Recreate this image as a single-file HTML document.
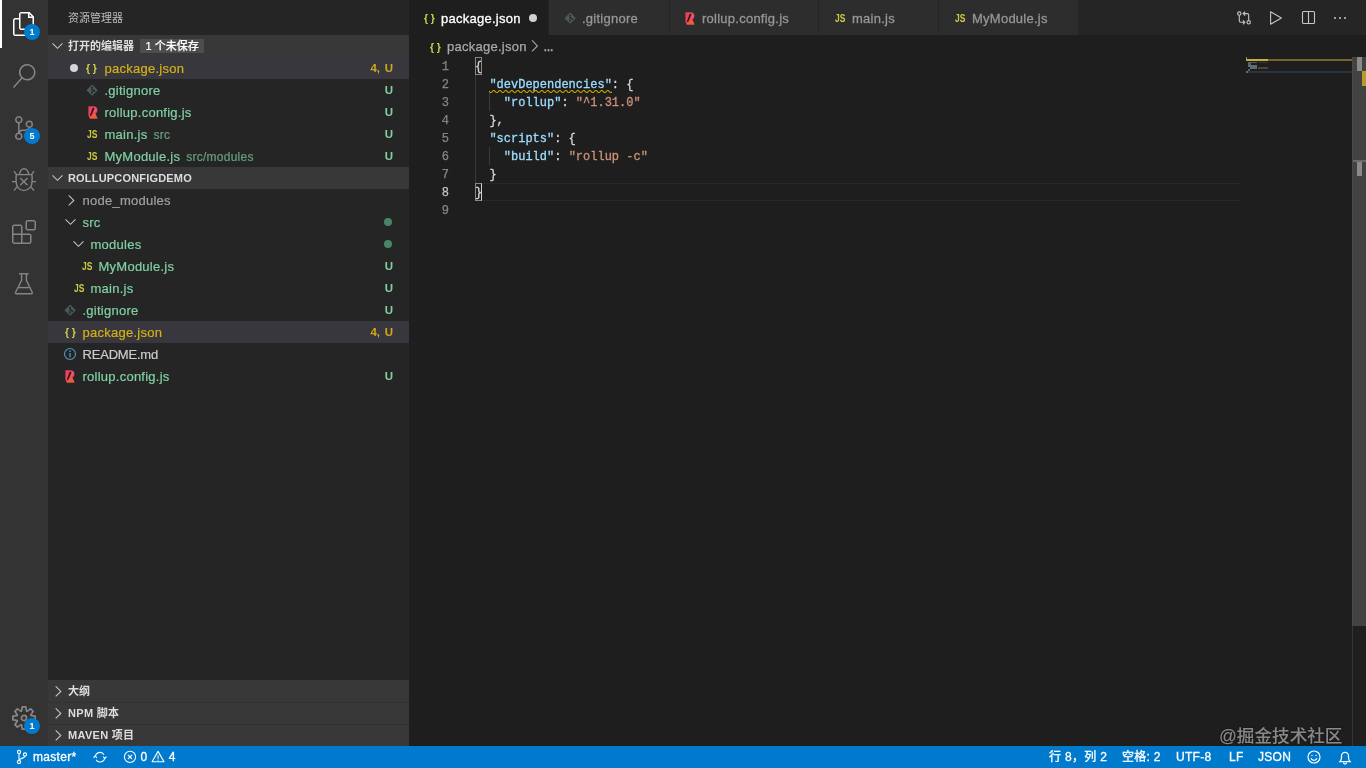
<!DOCTYPE html>
<html lang="zh-CN">
<head>
<meta charset="utf-8">
<title>package.json — rollupConfigDemo</title>
<style>
html,body{margin:0;padding:0;}
body{width:1366px;height:768px;overflow:hidden;background:#1e1e1e;position:relative;will-change:transform;
  font-family:"Liberation Sans","Noto Sans CJK SC",sans-serif;font-size:13px;color:#cccccc;}
.abs{position:absolute;}
#activity{position:absolute;left:0;top:0;width:48px;height:746px;background:#333333;}
#activity .ind{position:absolute;left:0;top:0;width:2px;height:48px;background:#ffffff;}
#activity svg{position:absolute;left:12px;width:24px;height:24px;}
.badge{position:absolute;width:16px;height:16px;border-radius:8px;background:#007acc;color:#fff;
  font-size:9px;font-weight:bold;line-height:16px;text-align:center;}
#sidebar{position:absolute;left:48px;top:0;width:361px;height:746px;background:#252526;z-index:2;}
#sidebar .title{position:absolute;left:20px;top:0;height:35px;line-height:36px;font-size:11px;color:#bbbbbb;}
.hdr{position:absolute;left:0;width:361px;height:22px;background:#383838;line-height:22px;
  font-size:11px;font-weight:bold;color:#dddddd;}
.hdr .tx{position:absolute;left:20px;top:0;white-space:nowrap;}
.hdr svg{position:absolute;left:3px;top:3px;width:16px;height:16px;}
.row{position:absolute;left:0;width:361px;height:22px;line-height:22px;white-space:nowrap;}
.row.sel{background:#37373d;}
.row .lbl{position:absolute;top:1px;margin-left:.5px;letter-spacing:.25px;-webkit-text-stroke:.2px;}
.row .desc{font-size:12px;opacity:.7;margin-left:6px;}
.row .st{position:absolute;right:16px;top:-.5px;font-size:11.500px;font-weight:bold;word-spacing:1.500px;}
.row .st.y{color:#cfaa18;}
.row svg{position:absolute;}
.g{color:#80d0a2;}
.y{color:#d4b118;}
.jsic{position:absolute;font-size:10px;font-weight:bold;color:#cbcb41;letter-spacing:0;transform:scaleX(.85);transform-origin:0 50%;margin-left:.6px;margin-top:.5px;}
.bric{position:absolute;font-size:11.500px;font-weight:bold;color:#cfd24a;letter-spacing:3.100px;margin-top:0;margin-left:.6px;transform:scaleX(.9);transform-origin:0 50%;-webkit-text-stroke:0;}
.ubadge{position:absolute;left:92px;top:4px;height:14px;line-height:14px;padding:0 5.500px;background:#4d4d4d;color:#ffffff;font-weight:500;font-size:11px;white-space:nowrap;-webkit-text-stroke:.2px;}
.udot{position:absolute;width:8px;height:8px;border-radius:4px;background:#d4d4dc;}
.sdot{display:inline-block;width:8px;height:8px;border-radius:4px;background:#478569;vertical-align:middle;position:relative;top:-.5px;left:-1.500px}
.dim{color:#a0a0a0;}
#editor{position:absolute;left:408px;top:0;width:958px;height:746px;background:#1e1e1e;}
#tabs{position:absolute;left:0;top:0;width:958px;height:35px;background:#252526;}
.tab{position:absolute;top:0;height:35px;background:#2d2d2d;line-height:36px;color:#969696;white-space:nowrap;}
.tab.act{background:#1e1e1e;color:#ffffff;}
.tab .lbl{position:absolute;top:1px;letter-spacing:.25px;-webkit-text-stroke:.3px;}
#crumbs{position:absolute;left:0;top:36px;letter-spacing:.25px;-webkit-text-stroke:.25px;height:22px;line-height:22px;color:#a9a9a9;white-space:nowrap;}
.code{position:absolute;left:67px;font-family:"Liberation Mono",monospace;font-size:12px;line-height:18px;height:18px;white-space:pre;color:#d4d4d4;margin-top:1px;-webkit-text-stroke:.3px;}
.ln{position:absolute;left:0;width:41px;text-align:right;font-family:"Liberation Mono",monospace;font-size:12px;line-height:18px;height:18px;color:#858585;margin-top:1px;-webkit-text-stroke:.25px;}
.k{color:#9cdcfe;}
.s{color:#ce9178;}
#status{position:absolute;left:0;top:746px;width:1366px;height:22px;background:#007acc;color:#ffffff;font-size:12px;line-height:22px;white-space:nowrap;}
#status span{position:absolute;top:0;letter-spacing:.3px;-webkit-text-stroke:.3px #fff;}
#status svg{position:absolute;}
</style>
</head>
<body>
<div id="activity">
  <div class="ind"></div>
  <svg style="top:12px" viewBox="0 0 24 24"><path fill="#ffffff" d="M17.5 0H8.5L7 1.5V6H2.5L1 7.5V22.57L2.5 24H14.57L16 22.57V18H20.7L22 16.57V4.5L17.5 0ZM17.5 2.12L19.88 4.5H17.5V2.12ZM14.5 22.5H2.5V7.5H7V16.57L8.5 18H14.5V22.5ZM20.5 16.5H8.5V1.5H16V6H20.5V16.5Z"/></svg>
  <div class="badge" style="left:24px;top:24px">1</div>
  <svg style="top:64px" viewBox="0 0 24 24"><path fill="#858585" d="M15.25 0a8.25 8.25 0 0 0-6.18 13.72L1 22.88l1.12 1 8.05-9.12A8.251 8.251 0 1 0 15.25.01V0zm0 15a6.75 6.75 0 1 1 0-13.5 6.75 6.75 0 0 1 0 13.5z"/></svg>
  <svg style="top:116px" viewBox="0 0 24 24"><path fill="#858585" d="M21.007 8.222A3.738 3.738 0 0 0 15.045 5.2a3.737 3.737 0 0 0 1.156 6.583 2.988 2.988 0 0 1-2.668 1.67h-2.99a4.456 4.456 0 0 0-2.989 1.165V7.4a3.737 3.737 0 1 0-1.494 0v9.117a3.776 3.776 0 1 0 1.816.099 2.99 2.99 0 0 1 2.668-1.667h2.99a4.484 4.484 0 0 0 4.223-3.039 3.736 3.736 0 0 0 3.25-3.687zM4.565 3.738a2.242 2.242 0 1 1 4.484 0 2.242 2.242 0 0 1-4.484 0zm4.484 16.441a2.242 2.242 0 1 1-4.484 0 2.242 2.242 0 0 1 4.484 0zm8.221-9.715a2.242 2.242 0 1 1 0-4.485 2.242 2.242 0 0 1 0 4.485z"/></svg>
  <div class="badge" style="left:24px;top:128px">5</div>
  <svg style="top:168px" viewBox="0 0 24 24" fill="none" stroke="#858585" stroke-width="1.4" stroke-linecap="butt">
    <path d="M7.6 6.6a4.5 5.9 0 0 1 9 0"/>
    <path d="M5.2 6.6h13.8c1 0 1.2.4 1.2 1.2v5.6c0 5-3.6 9.2-8.2 9.2s-7.8-4.200-7.800-9.200V7.800c0-.8.200-1.200 1-1.200z" transform="translate(-.1 0)"/>
    <path d="M8.200 10l7.300 7.300M15.500 10l-7.300 7.300"/>
    <path d="M4.700 6.800L2 3.200M19.300 6.800L22 3.200M0 13.600h4M20 13.600h4M5.200 18.600L2 22.600M18.800 18.600L22 22.600"/>
  </svg>
  <svg style="top:220px" viewBox="0 0 24 24"><path fill="#858585" fill-rule="evenodd" clip-rule="evenodd" d="M13.500 1.500L15 0H22.500L24 1.500V9L22.500 10.500H15L13.500 9V1.500ZM15 1.500V9H22.500V1.500H15ZM0 15V6L1.500 4.500H9L10.500 6V13.500H18L19.500 15V22.500L18 24H10.500H9H1.500L0 22.500V15ZM9 13.500V6H1.500V13.500H9ZM9 15H1.500V22.500H9V15ZM10.500 22.500H18V15H10.500V22.500Z"/></svg>
  <svg style="top:272px" viewBox="0 0 24 24" fill="none" stroke="#858585" stroke-width="1.4" stroke-linejoin="round">
    <path d="M7 1.800h9.600"/>
    <path d="M9.600 1.800v6.600L3.600 20.200c-.4.900 0 1.600 1 1.600h14.600c1 0 1.400-.7 1-1.600L14.400 8.400V1.800"/>
    <path d="M6.600 15.600h10.800"/>
  </svg>
  <svg style="top:706px" viewBox="0 0 24 24"><path fill="#858585" d="M19.850 8.750l4.150.83v4.840l-4.150.83 2.350 3.520-3.430 3.430-3.520-2.350-.83 4.150H9.580l-.83-4.150-3.520 2.350-3.430-3.430 2.350-3.520L0 14.420V9.580l4.150-.83L1.800 5.230 5.230 1.800l3.520 2.350L9.580 0h4.840l.83 4.150 3.520-2.350 3.430 3.430-2.350 3.520zm-1.570 5.070l4-.81v-2l-4-.81-.54-1.300 2.290-3.430-1.430-1.430-3.430 2.290-1.300-.54-.81-4h-2l-.81 4-1.300.54-3.430-2.290-1.430 1.430L6.380 8.900l-.54 1.300-4 .81v2l4 .81.540 1.300-2.290 3.430 1.430 1.430 3.430-2.290 1.300.54.810 4h2l.81-4 1.300-.54 3.430 2.290 1.430-1.430-2.290-3.430.54-1.300zm-8.186-4.672A3.430 3.430 0 0 1 12 8.570 3.440 3.440 0 0 1 15.430 12a3.430 3.430 0 1 1-5.336-2.852zm.956 4.274c.281.188.612.288.95.288A1.700 1.700 0 0 0 13.710 12a1.710 1.710 0 1 0-2.660 1.422z"/></svg>
  <div class="badge" style="left:24px;top:718px">1</div>
</div>
<div id="sidebar">
  <div class="title">资源管理器</div>
  <div class="hdr" style="top:35px"><svg viewBox="0 0 16 16" style="left:2px;top:3px;width:16px;height:16px"><path fill="none" stroke="#c5c5c5" stroke-width="1.1" d="M2.500 5.400L7.500 10.300L12.500 5.400"/></svg><span class="tx">打开的编辑器</span><span class="ubadge">1 个未保存</span></div>
  <div class="row sel" style="top:57px"><span class="udot" style="left:22px;top:7px"></span><span class="bric" style="left:37.400px">{}</span><span class="lbl y" style="left:56px">package.json</span><span class="st y">4, U</span></div>
  <div class="row" style="top:79px"><svg viewBox="0 0 12 12" style="left:37.650px;top:4.700px;width:12.300px;height:12.300px"><path fill="#4b5b5c" d="M6 .5L11.500 6L6 11.500L.5 6z"/><path fill="none" stroke="#252526" stroke-width="1.100" d="M5.800 3.200V8.800M5.800 4.600L8 6.800"/><circle cx="5.800" cy="3.300" r=".9" fill="#252526"/><circle cx="5.800" cy="8.600" r=".9" fill="#252526"/><circle cx="8.100" cy="6.800" r=".9" fill="#252526"/></svg><span class="lbl g" style="left:56px">.gitignore</span><span class="st g">U</span></div>
  <div class="row" style="top:101px"><svg class="abs" viewBox="0 0 10 13" style="left:39.600px;top:5.200px;width:10px;height:13px"><path fill="#e2455c" d="M.4.200H5.400C8 .200 9.500 1.900 9.500 4.100C9.500 5.700 8.700 6.900 7.500 7.600L9.500 12.500H1.700L.4 9.500z"/><path fill="#ee5a3c" d="M1.700 12.500L5.600 6.300L7 7.600L9.500 12.500z"/><path fill="#d9607e" d="M5.800 1.300C7.500 1.300 8.500 2.600 8.500 4C8.500 5.300 7.700 6.200 6.800 6.700L5.800 6.100L6.900 2.800z"/><path fill="#3a0c10" d="M4.900 1.600L6.500 2.300L3.400 9.400L1.700 9.900z"/></svg><span class="lbl g" style="left:56px">rollup.config.js</span><span class="st g">U</span></div>
  <div class="row" style="top:123px"><span class="jsic" style="left:38px">JS</span><span class="lbl g" style="left:56px">main.js<span class="desc">src</span></span><span class="st g">U</span></div>
  <div class="row" style="top:145px"><span class="jsic" style="left:38px">JS</span><span class="lbl g" style="left:56px">MyModule.js<span class="desc">src/modules</span></span><span class="st g">U</span></div>
  <div class="hdr" style="top:167px"><svg viewBox="0 0 16 16" style="left:2px;top:3px;width:16px;height:16px"><path fill="none" stroke="#c5c5c5" stroke-width="1.1" d="M2.500 5.400L7.500 10.300L12.500 5.400"/></svg><span class="tx" style="letter-spacing:.18px">ROLLUPCONFIGDEMO</span></div>
  <div class="row" style="top:189px"><svg viewBox="0 0 16 16" style="left:15px;top:3px;width:16px;height:16px"><path fill="none" stroke="#c5c5c5" stroke-width="1.1" d="M5.700 3.400L10.800 8.400L5.700 13.400"/></svg><span class="lbl dim" style="left:34px">node_modules</span></div>
  <div class="row" style="top:211px"><svg viewBox="0 0 16 16" style="left:15px;top:3px;width:16px;height:16px"><path fill="none" stroke="#c5c5c5" stroke-width="1.1" d="M2.500 5.400L7.500 10.300L12.500 5.400"/></svg><span class="lbl g" style="left:34px">src</span><span class="st g"><i class="sdot"></i></span></div>
  <div class="row" style="top:233px"><svg viewBox="0 0 16 16" style="left:23px;top:3px;width:16px;height:16px"><path fill="none" stroke="#c5c5c5" stroke-width="1.1" d="M2.500 5.400L7.500 10.300L12.500 5.400"/></svg><span class="lbl g" style="left:42px">modules</span><span class="st g"><i class="sdot"></i></span></div>
  <div class="row" style="top:255px"><span class="jsic" style="left:33px">JS</span><span class="lbl g" style="left:50px">MyModule.js</span><span class="st g">U</span></div>
  <div class="row" style="top:277px"><span class="jsic" style="left:25px">JS</span><span class="lbl g" style="left:42px">main.js</span><span class="st g">U</span></div>
  <div class="row" style="top:299px"><svg viewBox="0 0 12 12" style="left:15.650px;top:4.700px;width:12.300px;height:12.300px"><path fill="#4b5b5c" d="M6 .5L11.500 6L6 11.500L.5 6z"/><path fill="none" stroke="#252526" stroke-width="1.100" d="M5.800 3.200V8.800M5.800 4.600L8 6.800"/><circle cx="5.800" cy="3.300" r=".9" fill="#252526"/><circle cx="5.800" cy="8.600" r=".9" fill="#252526"/><circle cx="8.100" cy="6.800" r=".9" fill="#252526"/></svg><span class="lbl g" style="left:34px">.gitignore</span><span class="st g">U</span></div>
  <div class="row sel" style="top:321px"><span class="bric" style="left:16px">{}</span><span class="lbl y" style="left:34px">package.json</span><span class="st y">4, U</span></div>
  <div class="row" style="top:343px"><svg viewBox="0 0 14 14" style="left:15px;top:4px;width:14px;height:14px"><circle cx="7" cy="7" r="5.500" fill="none" stroke="#519aba" stroke-width="1.1"/><path stroke="#519aba" stroke-width="1.300" d="M7 6v4.200M7 3.600v1.300"/></svg><span class="lbl " style="left:34px;letter-spacing:-.2px">README.md</span></div>
  <div class="row" style="top:365px"><svg class="abs" viewBox="0 0 10 13" style="left:17.0px;top:5.0px;width:10px;height:13px"><path fill="#e2455c" d="M.4.200H5.400C8 .200 9.500 1.900 9.500 4.100C9.500 5.700 8.700 6.900 7.500 7.600L9.500 12.500H1.700L.4 9.500z"/><path fill="#ee5a3c" d="M1.700 12.500L5.600 6.300L7 7.600L9.500 12.500z"/><path fill="#d9607e" d="M5.800 1.300C7.500 1.300 8.500 2.600 8.500 4C8.500 5.300 7.700 6.200 6.800 6.700L5.800 6.100L6.900 2.800z"/><path fill="#3a0c10" d="M4.900 1.600L6.500 2.300L3.400 9.400L1.700 9.900z"/></svg><span class="lbl g" style="left:34px">rollup.config.js</span><span class="st g">U</span></div>
  <div class="hdr" style="top:680px"><svg viewBox="0 0 16 16" style="left:2px;top:3px;width:16px;height:16px"><path fill="none" stroke="#c5c5c5" stroke-width="1.1" d="M5.700 3.400L10.800 8.400L5.700 13.400"/></svg><span class="tx">大纲</span></div>
  <div class="hdr" style="top:702px;border-top:1px solid #313132;box-sizing:border-box"><svg viewBox="0 0 16 16" style="left:2px;top:2px;width:16px;height:16px"><path fill="none" stroke="#c5c5c5" stroke-width="1.1" d="M5.700 3.400L10.800 8.400L5.700 13.400"/></svg><span class="tx" style="top:-1px;letter-spacing:.3px">NPM 脚本</span></div>
  <div class="hdr" style="top:724px;border-top:1px solid #313132;box-sizing:border-box"><svg viewBox="0 0 16 16" style="left:2px;top:2px;width:16px;height:16px"><path fill="none" stroke="#c5c5c5" stroke-width="1.1" d="M5.700 3.400L10.800 8.400L5.700 13.400"/></svg><span class="tx" style="top:-1px;letter-spacing:.3px">MAVEN 项目</span></div>
</div>
<div id="editor">
  <div id="tabs">
    <div class="tab act" style="left:0;width:140px"><span class="bric" style="left:15px">{}</span><span class="lbl" style="left:33px">package.json</span><span class="udot" style="left:120.500px;top:14.200px;background:#d0d0d0"></span></div>
    <div class="tab" style="left:141px;width:120px"><svg class="abs" viewBox="0 0 12 12" style="left:14.650px;top:11.700px;width:12.300px;height:12.300px"><path fill="#4b5b5c" d="M6 .5L11.500 6L6 11.500L.5 6z"/><path fill="none" stroke="#2d2d2d" stroke-width="1.100" d="M5.800 3.200V8.800M5.800 4.600L8 6.800"/><circle cx="5.800" cy="3.300" r=".9" fill="#2d2d2d"/><circle cx="5.800" cy="8.600" r=".9" fill="#2d2d2d"/><circle cx="8.100" cy="6.800" r=".9" fill="#2d2d2d"/></svg><span class="lbl" style="left:33px">.gitignore</span></div>
    <div class="tab" style="left:262px;width:148px"><svg class="abs" viewBox="0 0 10 13" style="left:15.300px;top:11.900px;width:10px;height:13px"><path fill="#e2455c" d="M.4.200H5.400C8 .200 9.500 1.900 9.500 4.100C9.500 5.700 8.700 6.900 7.500 7.600L9.500 12.500H1.700L.4 9.500z"/><path fill="#ee5a3c" d="M1.700 12.500L5.600 6.300L7 7.600L9.500 12.500z"/><path fill="#d9607e" d="M5.800 1.300C7.500 1.300 8.500 2.600 8.500 4C8.500 5.300 7.700 6.200 6.800 6.700L5.800 6.100L6.900 2.800z"/><path fill="#3a0c10" d="M4.900 1.600L6.500 2.300L3.400 9.400L1.700 9.900z"/></svg><span class="lbl" style="left:32px">rollup.config.js</span></div>
    <div class="tab" style="left:411px;width:119px"><span class="jsic" style="left:15px">JS</span><span class="lbl" style="left:33px">main.js</span></div>
    <div class="tab" style="left:531px;width:139px"><span class="jsic" style="left:15px">JS</span><span class="lbl" style="left:33px">MyModule.js</span></div>
    <svg class="abs" style="left:827px;top:10px;width:16px;height:16px" viewBox="0 0 16 16" fill="none" stroke="#c5c5c5" stroke-width="1.100"><circle cx="4.300" cy="3.600" r="1.700"/><circle cx="13.700" cy="12.300" r="1.700"/><path d="M4.300 5.400V10.800Q4.300 12.300 5.800 12.300H9.600M7.900 10.300L9.900 12.300L7.900 14.300M13.700 10.500V5.100Q13.700 3.600 12.200 3.600H8.400M10.100 1.600L8.100 3.600L10.100 5.600"/></svg>
    <svg class="abs" style="left:859px;top:10px;width:16px;height:16px" viewBox="0 0 16 16" fill="none" stroke="#c5c5c5" stroke-width="1.100" stroke-linejoin="round"><path d="M3.600 1.800L14.400 8L3.600 14.200z"/></svg>
    <svg class="abs" style="left:892px;top:10px;width:16px;height:16px" viewBox="0 0 16 16" fill="none" stroke="#c5c5c5" stroke-width="1.100"><rect x="2.500" y="1.500" width="12" height="12" rx="1"/><path d="M8.500 1.500v12"/></svg>
    <svg class="abs" style="left:924px;top:10px;width:16px;height:16px" viewBox="0 0 16 16" fill="#c5c5c5"><circle cx="3" cy="8" r="1"/><circle cx="8" cy="8" r="1"/><circle cx="13" cy="8" r="1"/></svg>
  </div>
  <div id="crumbs"><span class="bric" style="left:21px">{}</span><span class="abs" style="left:39px">package.json</span><svg class="abs" style="left:119px;top:2px;width:16px;height:16px" viewBox="0 0 16 16"><path fill="none" stroke="#a9a9a9" stroke-width="1.100" d="M5 2.400L10.400 7.900L5 13.400"/></svg><span class="abs" style="left:135.500px;font-size:10px;font-weight:bold;letter-spacing:0;top:1px">…</span></div>
  <div class="abs" style="left:67px;top:183px;width:765px;height:16px;border-top:1px solid #282828;border-bottom:1px solid #282828"></div>
  <div class="abs" style="left:67px;top:75px;width:1px;height:108px;background:#3a3a3a"></div>
  <div class="abs" style="left:81px;top:93px;width:1px;height:18px;background:#3a3a3a"></div>
  <div class="abs" style="left:81px;top:147px;width:1px;height:18px;background:#3a3a3a"></div>
  <div class="ln" style="top:57px">1</div><div class="code" style="top:57px">{</div>
  <div class="ln" style="top:75px">2</div><div class="code" style="top:75px">  <span class="k">"devDependencies"</span>: {</div>
  <div class="ln" style="top:93px">3</div><div class="code" style="top:93px">    <span class="k">"rollup"</span>: <span class="s">"^1.31.0"</span></div>
  <div class="ln" style="top:111px">4</div><div class="code" style="top:111px">  },</div>
  <div class="ln" style="top:129px">5</div><div class="code" style="top:129px">  <span class="k">"scripts"</span>: {</div>
  <div class="ln" style="top:147px">6</div><div class="code" style="top:147px">    <span class="k">"build"</span>: <span class="s">"rollup -c"</span></div>
  <div class="ln" style="top:165px">7</div><div class="code" style="top:165px">  }</div>
  <div class="ln" style="top:183px;color:#c6c6c6">8</div><div class="code" style="top:183px">}</div>
  <div class="ln" style="top:201px">9</div><div class="code" style="top:201px"></div>
  <div class="abs" style="left:67px;top:57px;width:5px;height:16px;border:1px solid #888888"></div>
  <div class="abs" style="left:67px;top:183px;width:5px;height:16px;border:1px solid #888888;border-right-color:#d0d0d0"></div>
  <svg class="abs" style="left:81px;top:90px;width:123px;height:3px" viewBox="0 0 123 3"><defs><pattern id="sq" width="6" height="3" patternUnits="userSpaceOnUse"><g fill="#cca700"><polygon points="5.500,0 2.500,3 1.100,3 4.100,0"/><polygon points="4,0 6,2 6,0.600 5.400,0"/><polygon points="0,2 1,3 2.400,3 0,0.600"/></g></pattern></defs><rect width="123" height="3" fill="url(#sq)"/></svg>
  <div class="abs" style="left:838px;top:59px;width:106px;height:2px;background:#75652c"></div>
  <div class="abs" style="left:838px;top:59px;width:22px;height:2px;background:#c4b040"></div>
  <div class="abs" style="left:838px;top:57px;width:1px;height:4px;background:#a8a888;opacity:.8"></div>
  <div class="abs" style="left:838px;top:71px;width:106px;height:2px;background:#2b3441"></div>
  <div class="abs" style="left:840px;top:62px;width:9px;height:1px;background:#6f8390;opacity:.6"></div>
  <div class="abs" style="left:840px;top:63px;width:3px;height:2px;background:#8c8c8c;opacity:.6"></div>
  <div class="abs" style="left:840px;top:65px;width:9px;height:2px;background:#8aa2b2;opacity:.6"></div>
  <div class="abs" style="left:842px;top:67px;width:7px;height:2px;background:#8aa2b2;opacity:.6"></div><div class="abs" style="left:850px;top:67px;width:10px;height:2px;background:#7a5a48;opacity:.6"></div>
  <div class="abs" style="left:851px;top:62px;width:9px;height:1px;background:#5a4438;opacity:.6"></div>
  <div class="abs" style="left:840px;top:69px;width:2px;height:2px;background:#8c8c8c;opacity:.6"></div>
  <div class="abs" style="left:838px;top:71px;width:2px;height:2px;background:#8c8c8c;opacity:.6"></div>
  <div class="abs" style="left:944px;top:57px;width:14px;height:689px;background:#1f1f1f;border-left:1px solid #363636;box-sizing:border-box"></div>
  <div class="abs" style="left:944px;top:57px;width:14px;height:569px;background:#424242;border-left:1px solid #4a4a4a;box-sizing:border-box"></div>
  <div class="abs" style="left:949px;top:57px;width:5px;height:14px;background:#8a8a8a"></div>
  <div class="abs" style="left:954px;top:71px;width:4px;height:15px;background:#b89a26"></div>
  <div class="abs" style="left:945px;top:160px;width:13px;height:2px;background:#6a6a6a"></div>
  <div class="abs" style="left:949px;top:162px;width:5px;height:14px;background:#8a8a8a"></div>
  <div class="abs" style="left:811px;top:725px;font-size:17.600px;line-height:22px;color:rgba(255,255,255,.5);white-space:nowrap;font-weight:500;text-shadow:0 0 2px rgba(0,0,0,.6)">@掘金技术社区</div>
</div>
<div id="status">
  <svg style="left:15px;top:3px;width:14px;height:16px" viewBox="0 0 14 16" fill="none" stroke="#fff" stroke-width="1.100"><circle cx="4" cy="3" r="1.600"/><circle cx="4" cy="13" r="1.600"/><circle cx="10" cy="5.500" r="1.600"/><path d="M4 4.600v6.800M10 7.100c0 2.500-6 2-6 4.300"/></svg>
  <span style="left:33px">master*</span>
  <svg style="left:92px;top:3px;width:16px;height:16px" viewBox="0 0 16 16" fill="none" stroke="#fff" stroke-width="1.100"><path d="M3.300 8A4.700 4.700 0 0 1 12 5.700M12.700 8.400A4.700 4.700 0 0 1 4 10.700"/><path d="M1.500 8.800L3.200 6.900L4.900 8.800M11.100 7.600L12.800 9.500L14.500 7.600"/></svg>
  <svg style="left:123px;top:4px;width:14px;height:14px" viewBox="0 0 14 14" fill="none" stroke="#fff" stroke-width="1.100"><circle cx="7" cy="6.900" r="5.600"/><path d="M4.900 4.800l4.200 4.200M9.100 4.800l-4.200 4.200"/></svg>
  <span style="left:140.500px">0</span>
  <svg style="left:151px;top:4px;width:14px;height:14px" viewBox="0 0 14 14" fill="none" stroke="#fff" stroke-width="1.100" stroke-linejoin="round"><path d="M7.050 1.400L13 11.700H1.100z"/><path d="M7.050 5.200v3.600M7.050 9.600v1.100" stroke-width="1"/></svg>
  <span style="left:168.700px">4</span>
  <span style="left:1049px">行 8，列 2</span>
  <span style="left:1122px">空格: 2</span>
  <span style="left:1176px">UTF-8</span>
  <span style="left:1229px">LF</span>
  <span style="left:1258px">JSON</span>
  <svg style="left:1307px;top:4px;width:14px;height:14px" viewBox="0 0 14 14" fill="none" stroke="#fff" stroke-width="1.200"><circle cx="7" cy="7" r="6"/><path d="M4 8.200a3.200 3.200 0 0 0 6 0"/><circle cx="5" cy="5.500" r=".7" fill="#fff" stroke="none"/><circle cx="9" cy="5.500" r=".7" fill="#fff" stroke="none"/></svg>
  <svg style="left:1337.500px;top:3px;width:14px;height:16px" viewBox="0 0 14 16" fill="none" stroke="#fff" stroke-width="1.250"><path d="M2 12.500h10c-1-1-1.500-2-1.500-4V7a3.500 3.500 0 0 0-7 0v1.500c0 2-.5 3-1.500 4z"/><path d="M5.500 13.500a1.500 1.500 0 0 0 3 0"/></svg>
</div>
</body>
</html>
